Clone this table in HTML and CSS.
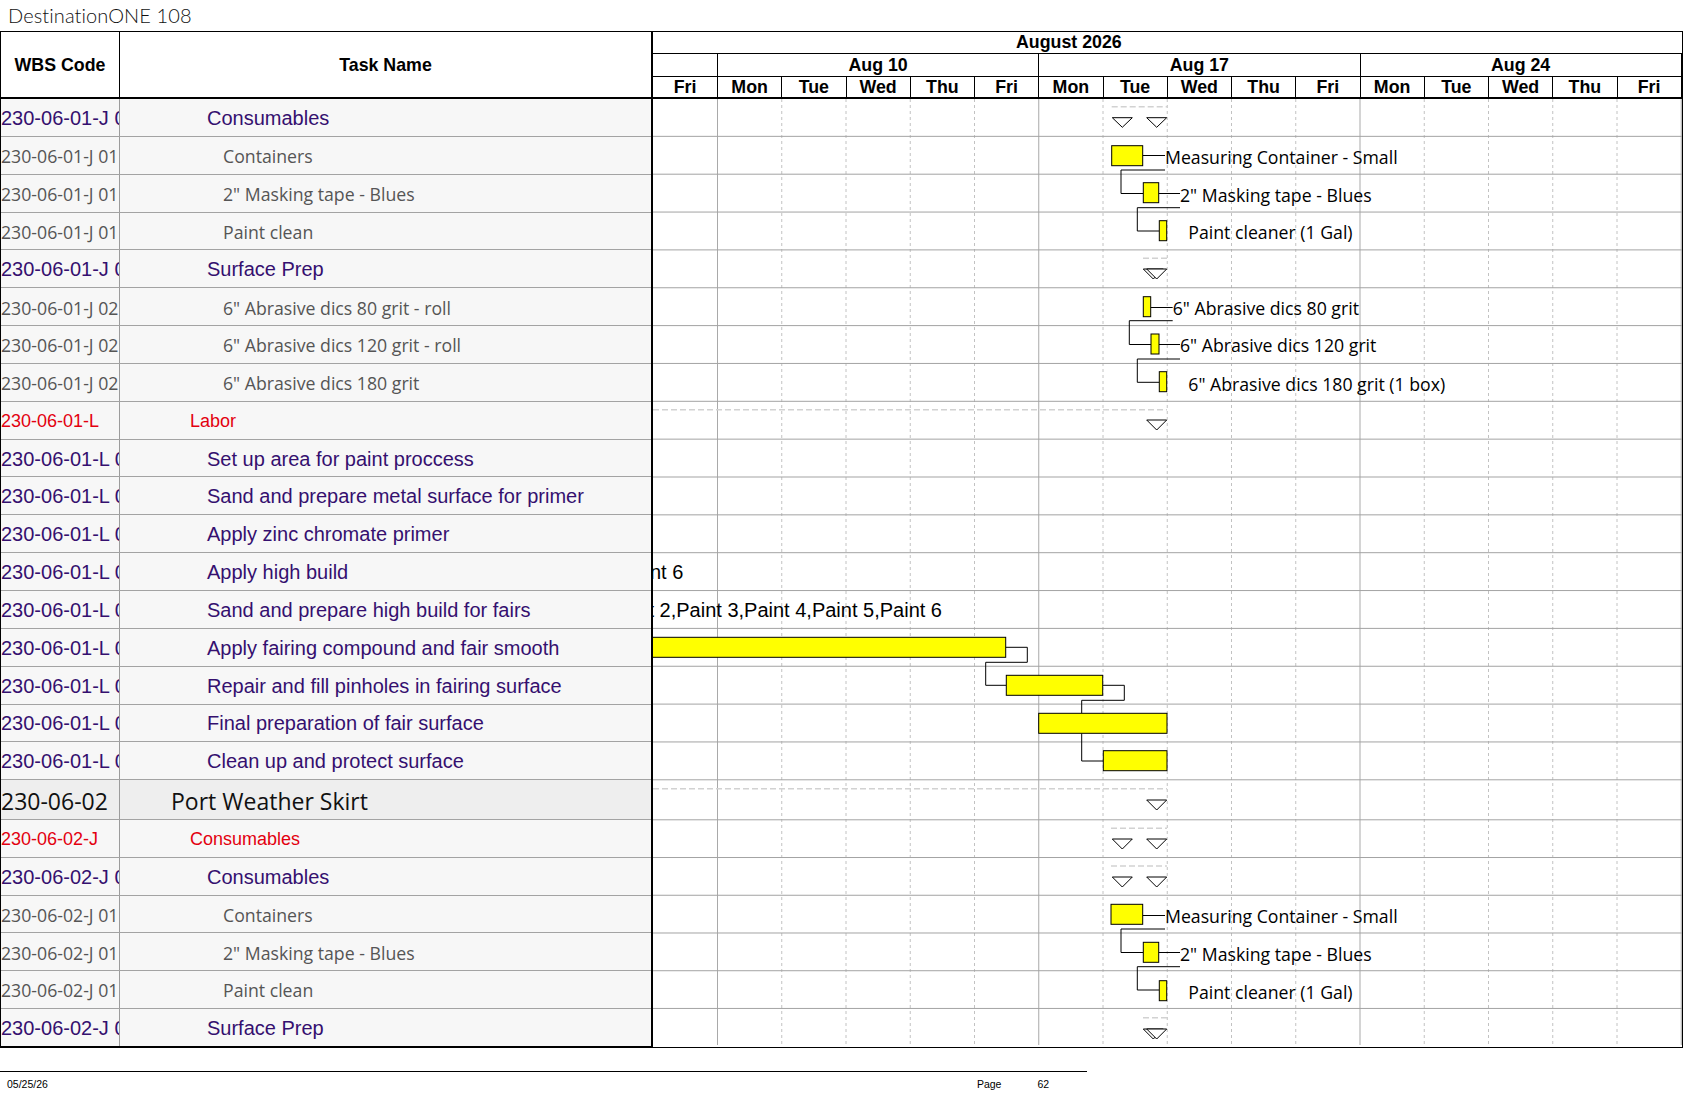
FILE: index.html
```html
<!DOCTYPE html>
<html>
<head>
<meta charset="utf-8">
<title>DestinationONE 108</title>
<link rel="stylesheet" href="styles.css">
</head>
<body>
<div class="title">DestinationONE 108</div>
<div class="sheet">
  <div class="head">
    <div class="hcell wbs">WBS Code</div>
    <div class="hcell task">Task Name</div>
    <div class="timeline">
      <div class="trow month"><span class="month-label">August 2026</span></div>
      <div class="trow week">
        <div class="tcell first"></div>
        <div class="tcell wk">Aug 10</div>
        <div class="tcell wk">Aug 17</div>
        <div class="tcell wk">Aug 24</div>
        <div class="tcell fill"></div>
      </div>
      <div class="trow days">
        <div class="tcell first">Fri</div>
        <div class="tcell day">Mon</div><div class="tcell day">Tue</div><div class="tcell day">Wed</div><div class="tcell day">Thu</div><div class="tcell day">Fri</div>
        <div class="tcell day">Mon</div><div class="tcell day">Tue</div><div class="tcell day">Wed</div><div class="tcell day">Thu</div><div class="tcell day">Fri</div>
        <div class="tcell day">Mon</div><div class="tcell day">Tue</div><div class="tcell day">Wed</div><div class="tcell day">Thu</div><div class="tcell day">Fri</div>
        <div class="tcell fill"></div>
      </div>
    </div>
  </div>
  <div class="body">
    <div class="left">
      <div class="row r sum"><div class="code">230-06-01-J 01</div><div class="name">Consumables</div></div>
      <div class="row r task"><div class="code">230-06-01-J 01.01</div><div class="name">Containers</div></div>
      <div class="row r task"><div class="code">230-06-01-J 01.02</div><div class="name">2" Masking tape - Blues</div></div>
      <div class="row r task"><div class="code">230-06-01-J 01.03</div><div class="name">Paint clean</div></div>
      <div class="row r sum"><div class="code">230-06-01-J 02</div><div class="name">Surface Prep</div></div>
      <div class="row r task"><div class="code">230-06-01-J 02.01</div><div class="name">6" Abrasive dics 80 grit - roll</div></div>
      <div class="row r task"><div class="code">230-06-01-J 02.02</div><div class="name">6" Abrasive dics 120 grit - roll</div></div>
      <div class="row r task"><div class="code">230-06-01-J 02.03</div><div class="name">6" Abrasive dics 180 grit</div></div>
      <div class="row r red"><div class="code">230-06-01-L</div><div class="name">Labor</div></div>
      <div class="row r sum"><div class="code">230-06-01-L 01</div><div class="name">Set up area for paint proccess</div></div>
      <div class="row r sum"><div class="code">230-06-01-L 02</div><div class="name">Sand and prepare metal surface for primer</div></div>
      <div class="row r sum"><div class="code">230-06-01-L 03</div><div class="name">Apply zinc chromate primer</div></div>
      <div class="row r sum"><div class="code">230-06-01-L 04</div><div class="name">Apply high build</div></div>
      <div class="row r sum"><div class="code">230-06-01-L 05</div><div class="name">Sand and prepare high build for fairs</div></div>
      <div class="row r sum"><div class="code">230-06-01-L 06</div><div class="name">Apply fairing compound and fair smooth</div></div>
      <div class="row r sum"><div class="code">230-06-01-L 07</div><div class="name">Repair and fill pinholes in fairing surface</div></div>
      <div class="row r sum"><div class="code">230-06-01-L 08</div><div class="name">Final preparation of fair surface</div></div>
      <div class="row r sum"><div class="code">230-06-01-L 09</div><div class="name">Clean up and protect surface</div></div>
      <div class="row pws"><div class="code">230-06-02</div><div class="name">Port Weather Skirt</div></div>
      <div class="row rb red"><div class="code">230-06-02-J</div><div class="name">Consumables</div></div>
      <div class="row rb sum"><div class="code">230-06-02-J 01</div><div class="name">Consumables</div></div>
      <div class="row rb task"><div class="code">230-06-02-J 01.01</div><div class="name">Containers</div></div>
      <div class="row rb task"><div class="code">230-06-02-J 01.02</div><div class="name">2" Masking tape - Blues</div></div>
      <div class="row rb task"><div class="code">230-06-02-J 01.03</div><div class="name">Paint clean</div></div>
      <div class="row rb sum last"><div class="code">230-06-02-J 02</div><div class="name">Surface Prep</div></div>
    </div>
    <div class="chart">
      <svg class="gantt" width="1029" height="946" xmlns="http://www.w3.org/2000/svg">
        <g class="vs">
          <line x1="64.5" y1="0" x2="64.5" y2="946"/>
          <line x1="385.75" y1="0" x2="385.75" y2="946"/>
          <line x1="707" y1="0" x2="707" y2="946"/>
          <line x1="1028.25" y1="0" x2="1028.25" y2="946"/>
        </g>
        <g class="vd">
          <line x1="128.75" y1="0" x2="128.75" y2="946"/>
          <line x1="193" y1="0" x2="193" y2="946"/>
          <line x1="257.25" y1="0" x2="257.25" y2="946"/>
          <line x1="321.5" y1="0" x2="321.5" y2="946"/>
          <line x1="450" y1="0" x2="450" y2="946"/>
          <line x1="514.25" y1="0" x2="514.25" y2="946"/>
          <line x1="578.5" y1="0" x2="578.5" y2="946"/>
          <line x1="642.75" y1="0" x2="642.75" y2="946"/>
          <line x1="771.25" y1="0" x2="771.25" y2="946"/>
          <line x1="835.5" y1="0" x2="835.5" y2="946"/>
          <line x1="899.75" y1="0" x2="899.75" y2="946"/>
          <line x1="964" y1="0" x2="964" y2="946"/>
        </g>
        <g class="hl">
          <line x1="0" y1="37.35" x2="1029" y2="37.35"/>
          <line x1="0" y1="75.2" x2="1029" y2="75.2"/>
          <line x1="0" y1="113.05" x2="1029" y2="113.05"/>
          <line x1="0" y1="150.9" x2="1029" y2="150.9"/>
          <line x1="0" y1="188.75" x2="1029" y2="188.75"/>
          <line x1="0" y1="226.6" x2="1029" y2="226.6"/>
          <line x1="0" y1="264.45" x2="1029" y2="264.45"/>
          <line x1="0" y1="302.3" x2="1029" y2="302.3"/>
          <line x1="0" y1="340.15" x2="1029" y2="340.15"/>
          <line x1="0" y1="378" x2="1029" y2="378"/>
          <line x1="0" y1="415.85" x2="1029" y2="415.85"/>
          <line x1="0" y1="453.7" x2="1029" y2="453.7"/>
          <line x1="0" y1="491.55" x2="1029" y2="491.55"/>
          <line x1="0" y1="529.4" x2="1029" y2="529.4"/>
          <line x1="0" y1="567.25" x2="1029" y2="567.25"/>
          <line x1="0" y1="605.1" x2="1029" y2="605.1"/>
          <line x1="0" y1="642.95" x2="1029" y2="642.95"/>
          <line x1="0" y1="680.8" x2="1029" y2="680.8"/>
          <line x1="0" y1="720.8" x2="1029" y2="720.8"/>
          <line x1="0" y1="758.53" x2="1029" y2="758.53"/>
          <line x1="0" y1="796.26" x2="1029" y2="796.26"/>
          <line x1="0" y1="833.99" x2="1029" y2="833.99"/>
          <line x1="0" y1="871.72" x2="1029" y2="871.72"/>
          <line x1="0" y1="909.45" x2="1029" y2="909.45"/>
        </g>
        <g class="sumdash">
          <line x1="458.7" y1="7.7" x2="514" y2="7.7"/>
          <line x1="490" y1="159.3" x2="514" y2="159.3"/>
          <line x1="0" y1="310.8" x2="514" y2="310.8"/>
          <line x1="0" y1="689.7" x2="514" y2="689.7"/>
          <line x1="458" y1="729.3" x2="514" y2="729.3"/>
          <line x1="458" y1="767" x2="514" y2="767"/>
          <line x1="490" y1="918.7" x2="514" y2="918.7"/>
        </g>
        <g class="ms">
          <polygon points="459.3,18.7 479.3,18.7 469.3,28.3"/>
          <polygon points="493.7,18.7 513.7,18.7 503.7,28.3"/>
          <polygon points="490.3,170 510.3,170 500.3,180"/>
          <polygon points="493.7,170 513.7,170 503.7,180"/>
          <polygon points="493.7,321 513.7,321 503.7,331"/>
          <polygon points="493.7,701 513.7,701 503.7,711"/>
          <polygon points="459.3,740 479.3,740 469.3,750"/>
          <polygon points="493.7,740 513.7,740 503.7,750"/>
          <polygon points="459.3,778 479.3,778 469.3,788"/>
          <polygon points="493.7,778 513.7,778 503.7,788"/>
          <polygon points="490.3,930 510.3,930 500.3,940"/>
          <polygon points="493.7,930 513.7,930 503.7,940"/>
        </g>
        <g class="ln">
          <path d="M489.7 56.5 H512"/>
          <path d="M505.7 94.5 H527"/>
          <path d="M497.7 208.5 H519.7"/>
          <path d="M506 245.5 H527"/>
          <path d="M489.7 816.5 H512"/>
          <path d="M505.7 853.5 H527"/>
          <polyline points="512,71 468,71 468,94.5 490.3,94.5"/>
          <polyline points="527,108.7 484.3,108.7 484.3,132 506.3,132"/>
          <polyline points="519.7,221.7 476.3,221.7 476.3,245.5 498,245.5"/>
          <polyline points="527,260 484.3,260 484.3,283.3 506.3,283.3"/>
          <polyline points="352.7,548.3 374.3,548.3 374.3,563.3 332.7,563.3 332.7,586.3 353.3,586.3"/>
          <polyline points="449.7,586.3 471.3,586.3 471.3,601.3 428.7,601.3 428.7,614.3"/>
          <polyline points="428.7,634.3 428.7,662 450.3,662"/>
          <polyline points="512,830 468,830 468,853.5 490.3,853.5"/>
          <polyline points="527,867.7 484.3,867.7 484.3,891 506.3,891"/>
        </g>
        <g class="bar">
          <rect x="458.7" y="46.7" width="31" height="20"/>
          <rect x="490.3" y="83.7" width="15.4" height="20"/>
          <rect x="506.3" y="121.7" width="7.4" height="20"/>
          <rect x="490.3" y="197.7" width="7.4" height="20"/>
          <rect x="498" y="235" width="8" height="20"/>
          <rect x="506.3" y="272.7" width="7.4" height="20"/>
          <rect x="-2" y="538.3" width="354.7" height="20"/>
          <rect x="353.3" y="576.3" width="96.4" height="20"/>
          <rect x="385.7" y="614.3" width="128.3" height="20"/>
          <rect x="450.3" y="651.7" width="63.7" height="20"/>
          <rect x="458" y="805.3" width="31.7" height="20"/>
          <rect x="490.3" y="843.3" width="15.4" height="20"/>
          <rect x="506.3" y="881.7" width="7.4" height="20"/>
        </g>
        <g class="lbl">
          <text x="512" y="64.8">Measuring Container - Small</text>
          <text x="527" y="102.5">2" Masking tape - Blues</text>
          <text x="535.3" y="139.8">Paint cleaner (1 Gal)</text>
          <text x="519.7" y="215.5">6" Abrasive dics 80 grit</text>
          <text x="527" y="253.2">6" Abrasive dics 120 grit</text>
          <text x="535.3" y="291.5">6" Abrasive dics 180 grit (1 box)</text>
          <text x="512" y="823.8">Measuring Container - Small</text>
          <text x="527" y="861.5">2" Masking tape - Blues</text>
          <text x="535.3" y="899.8">Paint cleaner (1 Gal)</text>
        </g>
        <g class="res">
          <text x="30.3" y="479.8" text-anchor="end">Paint 1,Paint 2,Paint 3,Paint 4,Paint 5,Paint 6</text>
          <text x="289" y="518.2" text-anchor="end">Paint 1,Paint 2,Paint 3,Paint 4,Paint 5,Paint 6</text>
        </g>
      </svg>
    </div>
  </div>
</div>
<div class="footer">
  <span class="f-date">05/25/26</span>
  <span class="f-page">Page</span>
  <span class="f-num">62</span>
</div>
</body>
</html>
```

FILE: styles.css
```css
* { box-sizing: border-box; }

body {
  margin: 0;
  background: #ffffff;
  width: 1687px;
  font-family: "Liberation Sans", Arial, sans-serif;
  color: #000;
}

.title {
  height: 31px;
  padding-left: 8px;
  font-family: "Lato", "DejaVu Sans", sans-serif;
  font-weight: 300;
  font-size: 20px;
  letter-spacing: 0.1px;
  line-height: 30px;
  color: #111111;
}

.sheet {
  width: 1683px;
  border-top: 1px solid #000;
  border-left: 1px solid #000;
  border-right: 1px solid #000;
  border-bottom: 1.5px solid #000;
}

/* ---------- header ---------- */
.head {
  display: flex;
  height: 67px;
  border-bottom: 2px solid #000;
}

.hcell {
  display: flex;
  align-items: center;
  justify-content: center;
  padding-top: 1px;
  font-weight: bold;
  font-size: 17.8px;
}

.hcell.wbs { width: 119px; border-right: 1px solid #000; }
.hcell.task { width: 531px; }

.timeline {
  width: 1031px;
  border-left: 2px solid #000;
  display: flex;
  flex-direction: column;
}

.trow {
  display: flex;
  border-bottom: 1px solid #000;
  font-weight: bold;
  font-size: 17.8px;
}

.trow.month { height: 22px; line-height: 21px; }
.trow.week { height: 23px; line-height: 23px; }
.trow.days { height: 20px; line-height: 21px; border-bottom: none; }

.month-label { padding-left: 363px; }

.tcell {
  border-right: 1px solid #000;
  text-align: center;
  white-space: nowrap;
}

.tcell.first { width: 65px; flex: none; }
.tcell.wk { width: 321.25px; flex: none; }
.tcell.day { width: 64.25px; flex: none; }
.tcell.fill { flex: 1; border-right: none; }

/* ---------- body ---------- */
.body { display: flex; }

.left {
  width: 650px;
  background: #f7f7f7;
}

.row {
  display: flex;
  border-bottom: 1px solid #a3a3a3;
}

.row.r { height: 37.85px; }
.row.rb { height: 37.73px; }
.row.pws { height: 40px; background: #eeeeee; }
.row.last { border-bottom-color: #000; }

.code {
  width: 119px;
  flex: none;
  border-right: 1px solid #9c9c9c;
  overflow: hidden;
  white-space: nowrap;
  display: flex;
  align-items: center;
  padding-top: 2px;
}

.name {
  flex: 1;
  display: flex;
  align-items: center;
  white-space: nowrap;
  overflow: hidden;
  padding-top: 2px;
}

.sum .code, .sum .name {
  font-family: "Liberation Sans", Arial, sans-serif;
  font-size: 20px;
  color: #35106f;
}
.sum .name { padding-left: 87px; }

.task .code, .task .name {
  font-family: "Open Sans", "Noto Sans", sans-serif;
  font-size: 17.7px;
  color: #555555;
}
.task .name { padding-left: 103px; }

.red .code, .red .name {
  font-family: "Liberation Sans", Arial, sans-serif;
  font-size: 18px;
  color: #e3000f;
}
.red .name { padding-left: 70px; }

.pws .code, .pws .name {
  font-family: "Open Sans", "Noto Sans", sans-serif;
  font-size: 23px;
  color: #111111;
}
.pws .name { padding-left: 51px; }

.chart {
  width: 1031px;
  border-left: 2px solid #000;
  background: #ffffff;
}

.gantt { display: block; }

.vs line { stroke: #a9a9a9; stroke-width: 1; }
.vd line { stroke: #c2c2c2; stroke-width: 1; stroke-dasharray: 3 3; }
.hl line { stroke: #a3a3a3; stroke-width: 1; }
.sumdash line { stroke: #d2d2d2; stroke-width: 1.5; stroke-dasharray: 6 3; }
.ms polygon { fill: #ffffff; stroke: #000; stroke-width: 1; }
.ln path, .ln polyline { fill: none; stroke: #000; stroke-width: 1; }
.bar rect { fill: #ffff00; stroke: #000; stroke-width: 1; }

.lbl text {
  font-family: "Open Sans", "Noto Sans", sans-serif;
  font-size: 17.7px;
  fill: #000;
}

.res text {
  font-family: "Liberation Sans", Arial, sans-serif;
  font-size: 20px;
  fill: #000;
}

/* ---------- footer ---------- */
.footer {
  width: 1087px;
  margin-top: 23px;
  border-top: 1px solid #000;
  display: flex;
  padding-top: 6px;
  font-family: "Liberation Sans", Arial, sans-serif;
  font-size: 10.5px;
  line-height: 12px;
  color: #000;
}

.f-date { margin-left: 7px; }
.f-page { margin-left: 929px; }
.f-num { margin-left: 36px; }
```
